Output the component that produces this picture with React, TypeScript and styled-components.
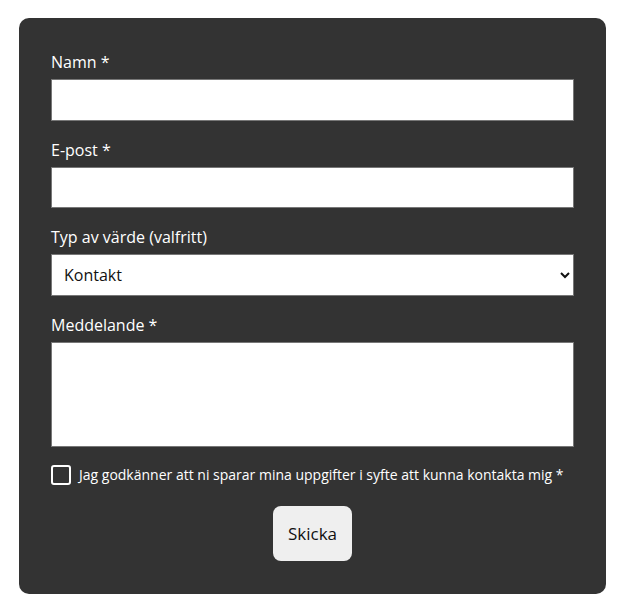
import * as React from 'react';
import styled, { createGlobalStyle } from 'styled-components';

const GlobalStyle = createGlobalStyle`
  body {
    margin: 0;
    background: #fff;
    font-family: 'Open Sans', 'Liberation Sans', sans-serif;
  }
`;

const Page = styled.div`
  padding: 18px 28px 20px 19px;
`;

const Card = styled.form`
  background: #333333;
  border-radius: 10px;
  padding: 32px 32px 33px;
  display: flex;
  flex-direction: column;
`;

const Field = styled.div`
  display: flex;
  flex-direction: column;
  margin-bottom: 17px;
`;

const Label = styled.label`
  color: #fff;
  font-size: 16px;
  line-height: 24px;
  margin-bottom: 5px;
`;

const TextInput = styled.input`
  box-sizing: border-box;
  height: 41.5px;
  width: 100%;
  border: 1px solid #777;
  background: #fff;
  padding: 0 12px;
  font: inherit;
  font-size: 16px;
  outline: none;
`;

const Select = styled.select`
  box-sizing: border-box;
  height: 41.5px;
  width: 100%;
  border: 1px solid #777;
  border-radius: 0;
  background: #fff;
  padding: 0 8px 0 8px;
  font-family: inherit;
  font-size: 16px;
  color: #111;
  outline: none;
`;

const TextArea = styled.textarea`
  box-sizing: border-box;
  height: 105.5px;
  width: 100%;
  border: 1px solid #777;
  background: #fff;
  resize: none;
  font: inherit;
  outline: none;
`;

const ConsentRow = styled.label`
  display: flex;
  align-items: center;
  gap: 8px;
  color: #fff;
  font-size: 14px;
  line-height: 22px;
`;

const Box = styled.span`
  box-sizing: border-box;
  width: 20px;
  height: 20px;
  border: 2px solid #fff;
  border-radius: 3px;
  flex-shrink: 0;
`;

const Actions = styled.div`
  display: flex;
  justify-content: center;
  margin-top: 20px;
`;

const SubmitButton = styled.button`
  width: 79px;
  height: 55px;
  background: #efefef;
  color: #111;
  border: none;
  border-radius: 8px;
  font-family: inherit;
  font-size: 17px;
`;

export default function App() {
  return (
    <>
      <GlobalStyle />
      <Page>
        <Card onSubmit={e => e.preventDefault()}>
          <Field>
            <Label>Namn *</Label>
            <TextInput type="text" />
          </Field>
          <Field>
            <Label>E-post *</Label>
            <TextInput type="email" />
          </Field>
          <Field>
            <Label>Typ av värde (valfritt)</Label>
            <Select defaultValue="kontakt">
              <option value="kontakt">Kontakt</option>
            </Select>
          </Field>
          <Field>
            <Label>Meddelande *</Label>
            <TextArea />
          </Field>
          <ConsentRow>
            <Box />
            Jag godkänner att ni sparar mina uppgifter i syfte att kunna kontakta mig *
          </ConsentRow>
          <Actions>
            <SubmitButton type="submit">Skicka</SubmitButton>
          </Actions>
        </Card>
      </Page>
    </>
  );
}
